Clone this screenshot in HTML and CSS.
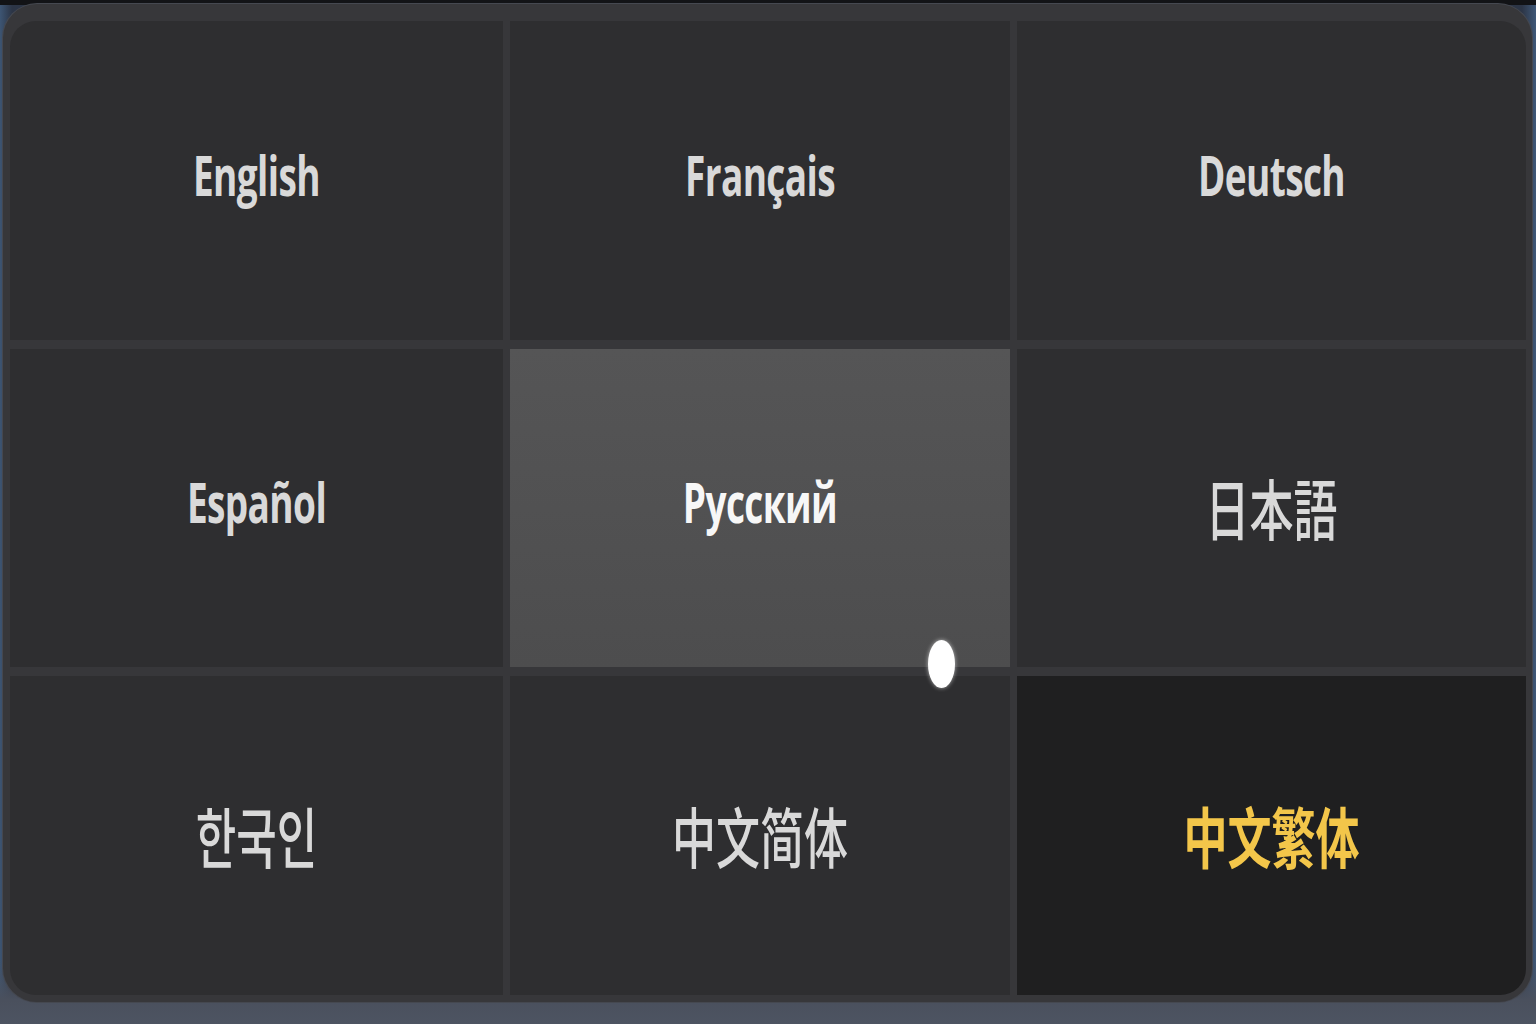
FILE: index.html
```html
<!DOCTYPE html>
<html lang="en">
<head>
<meta charset="utf-8">
<title>Language</title>
<link rel="stylesheet" href="styles.css">
</head>
<body>
  <div class="screen">
    <div class="panel">
      <div class="grid">
        <button class="lang"><span class="label">English</span></button>
        <button class="lang"><span class="label">Français</span></button>
        <button class="lang"><span class="label">Deutsch</span></button>
        <button class="lang"><span class="label">Español</span></button>
        <button class="lang lang--hover"><span class="label">Русский</span></button>
        <button class="lang"><span class="label cjk" lang="ja">日本語</span></button>
        <button class="lang"><span class="label cjk" lang="ko">한국인</span></button>
        <button class="lang"><span class="label cjk" lang="zh-CN">中文简体</span></button>
        <button class="lang lang--active"><span class="label cjk" lang="zh-TW">中文繁体</span></button>
      </div>
      <span class="pointer"></span>
    </div>
  </div>
</body>
</html>
```

FILE: styles.css
```css
* { box-sizing: border-box; }

html, body {
  margin: 0;
  width: 1536px;
  height: 1024px;
  overflow: hidden;
}

body {
  background:
    linear-gradient(to bottom, #121316 0, #121316 5px, transparent 5px),
    linear-gradient(to right, #3d5573 0, #2c3546 12px, #2c3546 1522px, #3f5878 1536px),
    #2c3546;
  font-family: "Open Sans", "Noto Sans", sans-serif;
}

.screen {
  height: 100%;
  padding: 4px 4px 22px 3px;
  background: linear-gradient(to bottom, transparent 0, transparent 960px, #4a505d 1000px, #4d5462 1024px);
}

.panel {
  position: relative;
  height: 100%;
  background: #37373a;
  border-radius: 34px;
  padding: 17px 6px 7px 7px;
  box-shadow: 0 0 0 1px #454850;
}

.grid {
  height: 100%;
  display: grid;
  grid-template-columns: 493fr 500fr 509fr;
  grid-template-rows: 1fr 1fr 1fr;
  gap: 9px 7px;
}

.lang {
  border: 0;
  margin: 0;
  padding: 0;
  background: #2e2e30;
  display: flex;
  align-items: center;
  justify-content: center;
  font: inherit;
  cursor: pointer;
}

.grid .lang:first-child { border-top-left-radius: 26px; }
.grid .lang:nth-child(3) { border-top-right-radius: 26px; }
.grid .lang:nth-child(7) { border-bottom-left-radius: 26px; }
.grid .lang:nth-child(9) { border-bottom-right-radius: 26px; }

.lang--hover {
  background: linear-gradient(to bottom, #555556, #4d4d4e);
}

.lang--active {
  background: #1f1f20;
}

.label {
  display: inline-block;
  color: #d9d9d9;
  font-size: 37px;
  font-weight: 700;
  letter-spacing: -0.6px;
  transform: translateY(-7px) scaleY(1.52);
  line-height: 1;
}

.lang--hover .label { color: #f7f7f7; }

.cjk {
  font-family: "Noto Sans CJK SC", "Noto Sans CJK JP", "Noto Sans CJK KR", sans-serif;
  font-size: 44px;
  font-weight: 500;
  letter-spacing: 0;
  transform: translateY(-2px) scaleY(1.5);
}

.cjk:lang(ja) { font-family: "Noto Sans CJK JP", sans-serif; }
.cjk:lang(ko) { font-family: "Noto Sans CJK KR", sans-serif; }

.lang--active .label {
  color: #f3c64a;
  font-weight: 700;
}

/* pointer dot resting on the hovered button's lower edge */
.pointer {
  position: absolute;
  left: 925px;
  top: 636px;
  width: 27px;
  height: 48px;
  border-radius: 50%;
  background: #ffffff;
  box-shadow: 0 0 4px rgba(255, 255, 255, 0.6);
}
```
